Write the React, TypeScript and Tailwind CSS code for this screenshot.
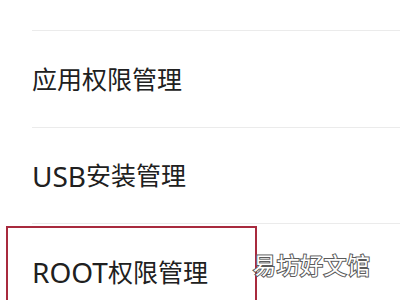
export default function App() {
  const font = { fontFamily: '"Noto Sans", "Noto Sans CJK SC", sans-serif' };

  return (
    <div
      className="relative w-[400px] h-[300px] overflow-hidden bg-white text-[#202020]"
      style={font}
    >
      {/* previous row, cut off */}
      <div className="h-[30px]" />
      <div className="ml-[32px] border-t border-[#ebebeb]" />

      <div className="h-[96px] flex items-center pl-[32px] text-[25px] leading-none">
        应用权限管理
      </div>
      <div className="ml-[32px] border-t border-[#ebebeb]" />

      <div className="h-[95px] flex items-center pl-[32px] text-[25px] leading-none">
        <span className="text-[28px]">USB</span>安装管理
      </div>
      <div className="ml-[32px] border-t border-[#ebebeb]" />

      <div className="h-[96px] flex items-center pl-[32px] text-[25px] leading-none">
        <span className="text-[28px]">ROOT</span>权限管理
      </div>

      {/* highlight box */}
      <div className="absolute left-[6px] top-[226px] w-[251px] h-[90px] border-[2.5px] border-[#a82a3e]" />

      {/* watermark */}
      <div
        className="absolute left-[253px] top-[254px] text-[23px] leading-none text-white tracking-[0.5px]"
        style={{ WebkitTextStroke: "2px #5a5a5a", paintOrder: "stroke fill" }}
      >
        易坊好文馆
      </div>
    </div>
  );
}
